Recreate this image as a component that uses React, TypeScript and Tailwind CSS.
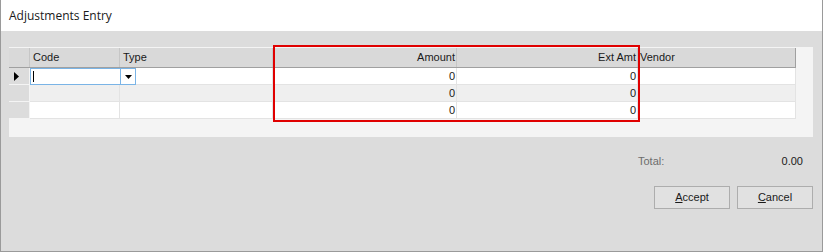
import React from "react";

const cellFont = { fontFamily: '"Liberation Sans", Arial, sans-serif' };

function HeaderRow() {
  return (
    <div className="flex h-[20px] bg-[#d9d9d9] border-b border-[#a0a0a0] text-[11px] text-[#1a1a1a]" style={cellFont}>
      <div className="w-[21px] border-r border-[#c6c6c6]" />
      <div className="w-[90px] border-r border-[#c6c6c6] pl-[3px] pt-[3px] leading-[13px]">Code</div>
      <div className="w-[153px] border-r border-[#c6c6c6] pl-[3px] pt-[3px] leading-[13px]">Type</div>
      <div className="w-[184px] border-r border-[#c6c6c6] pr-[1px] pt-[3px] leading-[13px] text-right">Amount</div>
      <div className="w-[181px] border-r border-[#c6c6c6] pr-[1px] pt-[3px] leading-[13px] text-right">Ext Amt</div>
      <div className="w-[158px] border-r border-[#a0a0a0] pl-[2px] pt-[3px] leading-[13px]">Vendor</div>
    </div>
  );
}

function DataRow({ alt, current }: { alt?: boolean; current?: boolean }) {
  const bg = alt ? "bg-[#efefef]" : "bg-white";
  return (
    <div className={`flex h-[17px] text-[11px] text-[#1a1a1a] ${bg}`} style={cellFont}>
      <div className="w-[21px] bg-[#dcdcdc] border-r border-b border-[#f4f4f4] flex items-center pl-[5px]">
        {current && (
          <svg width="6" height="9" viewBox="0 0 6 9">
            <path d="M0 0 L5 4.5 L0 9 Z" fill="#000" />
          </svg>
        )}
      </div>
      {current ? (
        <div className="w-[106px] flex border border-[#7ab4e6] bg-white">
          <div className="w-[89px] relative">
            <div className="absolute left-[2px] top-[2px] w-[1px] h-[11px] bg-black" />
          </div>
          <div className="w-[15px] border-l border-[#7ab4e6] flex items-center justify-center">
            <svg width="7" height="4" viewBox="0 0 7 4">
              <path d="M0 0 L7 0 L3.5 4 Z" fill="#000" />
            </svg>
          </div>
        </div>
      ) : (
        <>
          <div className="w-[90px] border-r border-b border-[#e3e3e3]" />
          <div className="w-[16px] border-b border-[#e3e3e3]" />
        </>
      )}
      <div className="w-[137px] border-r border-b border-[#e3e3e3]" />
      <div className="w-[184px] border-r border-b border-[#e3e3e3] pr-[1px] text-right leading-[16px]">0</div>
      <div className="w-[181px] border-r border-b border-[#e3e3e3] pr-[1px] text-right leading-[16px]">0</div>
      <div className="w-[158px] border-r border-b border-[#e3e3e3]" />
    </div>
  );
}

export default function App() {
  return (
    <div className="relative w-[823px] h-[252px] flex flex-col bg-[#dcdcdc] border-l border-r border-b border-[#9a9a9a] overflow-hidden">
      <div
        className="h-[31px] bg-white flex items-center pl-[8px] text-[12px] text-[#1a1a1a]"
        style={{ fontFamily: '"Segoe UI", "Open Sans", sans-serif' }}
      >
        Adjustments Entry
      </div>
      <div className="flex-1 flex flex-col">
        <div className="ml-[8px] mt-[16px] w-[804px] h-[90px] bg-[#f4f4f4] pt-[1px]">
          <div className="w-[787px]">
            <HeaderRow />
            <DataRow current />
            <DataRow alt />
            <DataRow />
          </div>
        </div>
        <div className="flex mt-[16px] h-[16px] items-center text-[11px]" style={cellFont}>
          <div className="ml-[637px] text-[#6d6d6d]">Total:</div>
          <div className="ml-auto mr-[19px] text-[#1a1a1a]">0.00</div>
        </div>
        <div className="flex gap-[7px] mt-[17px] ml-[653px] text-[11px] text-[#1a1a1a]" style={cellFont}>
          <button className="w-[76px] h-[23px] bg-[#e1e1e1] border border-[#adadad] flex items-center justify-center">
            <span><span className="underline">A</span>ccept</span>
          </button>
          <button className="w-[76px] h-[23px] bg-[#e1e1e1] border border-[#adadad] flex items-center justify-center">
            <span><span className="underline">C</span>ancel</span>
          </button>
        </div>
      </div>
      <div className="absolute left-[272px] top-[45px] w-[367px] h-[77px] border-2 border-[#e00000] pointer-events-none" />
    </div>
  );
}
